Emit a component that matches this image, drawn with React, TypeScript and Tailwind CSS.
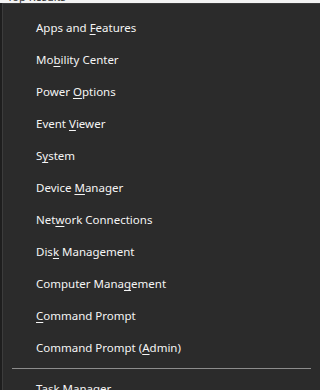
const items: { label: string; key: number }[] = [
  { label: "Apps and Features", key: 9 },
  { label: "Mobility Center", key: 2 },
  { label: "Power Options", key: 6 },
  { label: "Event Viewer", key: 6 },
  { label: "System", key: 1 },
  { label: "Device Manager", key: 7 },
  { label: "Network Connections", key: 3 },
  { label: "Disk Management", key: 3 },
  { label: "Computer Management", key: 13 },
  { label: "Command Prompt", key: 0 },
  { label: "Command Prompt (Admin)", key: 16 },
];

function Label({ label, k }: { label: string; k: number }) {
  return (
    <span className="whitespace-nowrap">
      {label.slice(0, k)}
      <span className="underline underline-offset-2">{label[k]}</span>
      {label.slice(k + 1)}
    </span>
  );
}

export default function App() {
  return (
    <div
      className="w-full h-[390px] overflow-hidden bg-[#1e1e1e] text-[11.5px] text-[#f5f5f5]"
      style={{ fontFamily: '"Noto Sans", "Segoe UI", sans-serif' }}
    >
      <div className="h-[3px] overflow-hidden bg-[#f3f3f3]">
        <div className="ml-[7px] -mt-[9px] text-[11px] leading-[12px] text-[#333]">
          Top Results
        </div>
      </div>
      <div className="ml-[2px] h-full border-l border-t border-[#3c3c3c] bg-[#2b2b2b] pt-[8px]">
        {items.map((it) => (
          <div key={it.label} className="h-[32px] pl-[33px] flex items-center">
            <Label label={it.label} k={it.key} />
          </div>
        ))}
        <div className="mx-[9px] my-[4px] h-px bg-[#8c8c8c]" />
        <div className="h-[32px] pl-[33px] flex items-center">
          <Label label="Task Manager" k={0} />
        </div>
      </div>
    </div>
  );
}
